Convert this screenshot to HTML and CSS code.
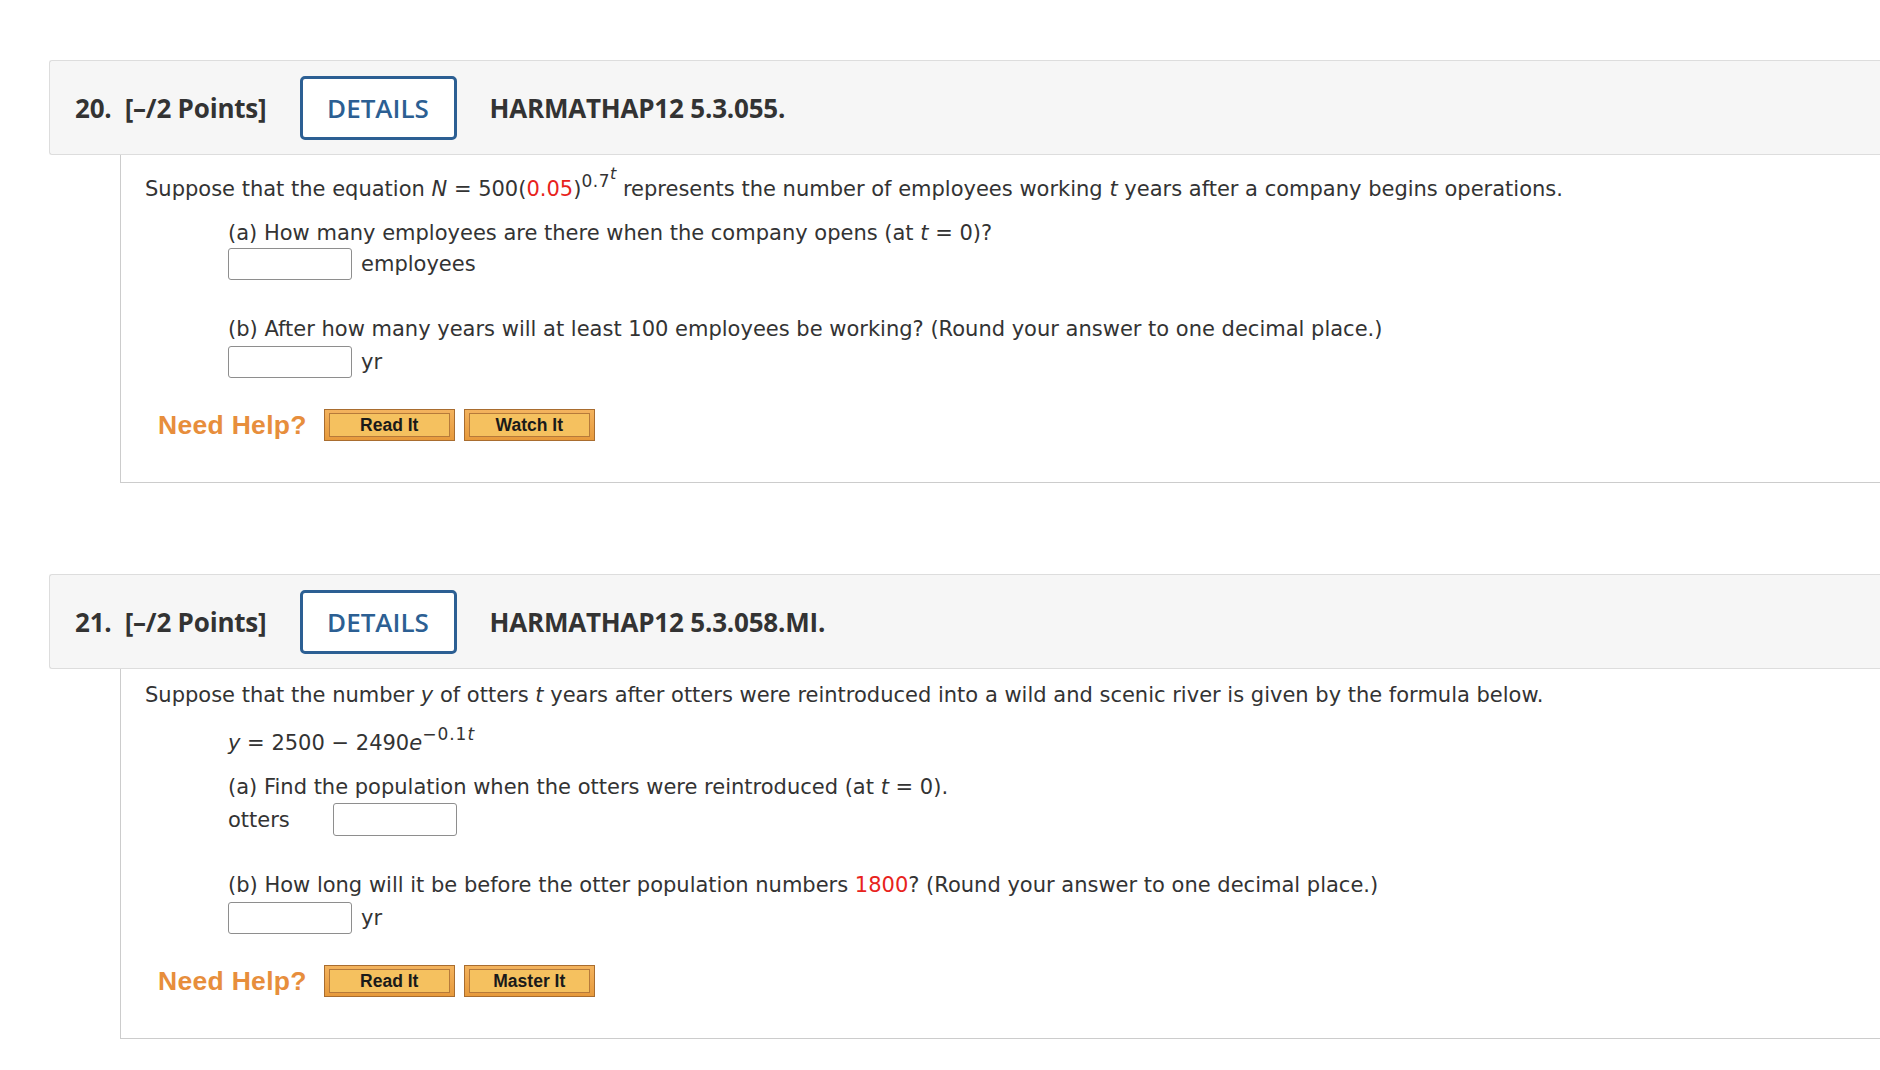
FILE: index.html
```html
<!DOCTYPE html>
<html lang="en">
<head>
<meta charset="utf-8">
<title>Questions</title>
<link rel="stylesheet" href="styles.css">
</head>
<body>
<main class="page">
  <section class="question">
    <header class="q-head">
      <span class="q-num">20.&nbsp; [–/2 Points]</span>
      <button class="details">DETAILS</button>
      <span class="q-code">HARMATHAP12 5.3.055.</span>
    </header>
    <div class="q-body">
      <p class="stem stem-raised">Suppose that the equation <i>N</i> = 500(<span class="red">0.05</span>)<sup class="sup">0.7<sup class="sup2"><i>t</i></sup></sup> represents the number of employees working <i>t</i> years after a company begins operations.</p>
      <div class="parts">
        <p class="part">(a) How many employees are there when the company opens (at <i>t</i> = 0)?</p>
        <div class="answer"><span class="box"></span><span class="unit">employees</span></div>
        <p class="part part-gap">(b) After how many years will at least 100 employees be working? (Round your answer to one decimal place.)</p>
        <div class="answer answer-b"><span class="box"></span><span class="unit">yr</span></div>
      </div>
      <div class="help">
        <span class="help-label">Need Help?</span>
        <button class="hbtn"><span class="hbtn-in">Read It</span></button>
        <button class="hbtn"><span class="hbtn-in">Watch It</span></button>
      </div>
    </div>
  </section>

  <section class="question question-next">
    <header class="q-head">
      <span class="q-num">21.&nbsp; [–/2 Points]</span>
      <button class="details">DETAILS</button>
      <span class="q-code">HARMATHAP12 5.3.058.MI.</span>
    </header>
    <div class="q-body">
      <p class="stem">Suppose that the number <i>y</i> of otters <i>t</i> years after otters were reintroduced into a wild and scenic river is given by the formula below.</p>
      <div class="parts">
        <p class="formula"><i>y</i> = 2500 − 2490<i>e</i><sup class="sup sup-e">−0.1<i>t</i></sup></p>
        <p class="part">(a) Find the population when the otters were reintroduced (at <i>t</i> = 0).</p>
        <div class="answer answer-otters"><span class="label">otters</span><span class="box"></span></div>
        <p class="part part-gap">(b) How long will it be before the otter population numbers <span class="red">1800</span>? (Round your answer to one decimal place.)</p>
        <div class="answer answer-b"><span class="box"></span><span class="unit">yr</span></div>
      </div>
      <div class="help">
        <span class="help-label">Need Help?</span>
        <button class="hbtn"><span class="hbtn-in">Read It</span></button>
        <button class="hbtn"><span class="hbtn-in">Master It</span></button>
      </div>
    </div>
  </section>
</main>
</body>
</html>
```

FILE: styles.css
```css
html, body {
  margin: 0;
  padding: 0;
  background: #ffffff;
}

body {
  font-family: "DejaVu Sans", Verdana, sans-serif;
  color: #333333;
  overflow: hidden;
}

.page {
  padding: 60px 0 0 49px;
}

.question-next {
  margin-top: 91px;
}

.q-head {
  display: flex;
  align-items: center;
  height: 93px;
  background: #f6f6f6;
  border: 1px solid #dddddd;
  border-right: none;
  border-radius: 3px 0 0 3px;
  padding-left: 25px;
  font-family: "Open Sans", "DejaVu Sans", sans-serif;
  color: #333333;
}

.q-num {
  font-size: 26px;
  font-weight: 700;
  letter-spacing: -0.2px;
}

.details {
  margin-left: 33px;
  width: 157px;
  height: 64px;
  box-sizing: border-box;
  border: 3px solid #2c5f93;
  border-radius: 5px;
  background: #ffffff;
  color: #2c5f93;
  font-family: "Open Sans", "DejaVu Sans", sans-serif;
  font-size: 26px;
  font-weight: 600;
  padding: 0;
  cursor: pointer;
}

.q-code {
  margin-left: 33px;
  font-size: 26px;
  font-weight: 700;
  letter-spacing: -0.2px;
}

.q-body {
  margin-left: 71px;
  border-left: 1px solid #cccccc;
  border-bottom: 1px solid #cccccc;
  padding: 11px 0 41px 24px;
  font-size: 21px;
}

.stem {
  margin: 0;
  line-height: 30px;
}

.stem-raised {
  margin-top: 8px;
}

.red {
  color: #e8231c;
}

.sup {
  font-size: 17px;
  line-height: 0;
  letter-spacing: 0.5px;
  vertical-align: 9px;
}

.sup2 {
  font-size: 16px;
  line-height: 0;
  letter-spacing: 0;
  vertical-align: 8px;
}

.sup-e {
  letter-spacing: 1px;
  vertical-align: 10px;
}

.parts {
  margin-left: 83px;
}

.formula {
  margin: 18px 0 0;
  line-height: 30px;
}

.part {
  margin: 14px 0 0;
  line-height: 30px;
}

.part-gap {
  margin-top: 34px;
}

.answer {
  display: flex;
  align-items: center;
  height: 32px;
}

.answer-b {
  margin-top: 2px;
}

.answer-otters {
  margin-top: 1px;
  height: 33px;
}

.box {
  display: inline-block;
  width: 124px;
  height: 32px;
  box-sizing: border-box;
  border: 1px solid #8e8e8e;
  border-radius: 3px;
  background: #ffffff;
}

.answer-otters .box {
  height: 33px;
}

.unit {
  margin-left: 9px;
}

.label {
  width: 105px;
}

.help {
  display: flex;
  align-items: center;
  margin: 31px 0 0 13px;
}

.help-label {
  font-family: "Liberation Sans", Arial, sans-serif;
  font-weight: 700;
  font-size: 26.5px;
  color: #e78e3c;
  margin-right: 17px;
  letter-spacing: 0.3px;
}

.hbtn {
  width: 131px;
  height: 32px;
  box-sizing: border-box;
  padding: 3px 4px;
  margin-right: 9px;
  border: 1px solid #a96d2f;
  background: linear-gradient(#f3b35e, #e79a3c);
  cursor: pointer;
  display: flex;
}

.hbtn-in {
  flex: 1;
  display: flex;
  align-items: center;
  justify-content: center;
  border: 1px solid #b67a3a;
  background: #f5c15f;
  font-family: "Liberation Sans", Arial, sans-serif;
  font-weight: 700;
  font-size: 17.5px;
  color: #1a1a1a;
}
```
